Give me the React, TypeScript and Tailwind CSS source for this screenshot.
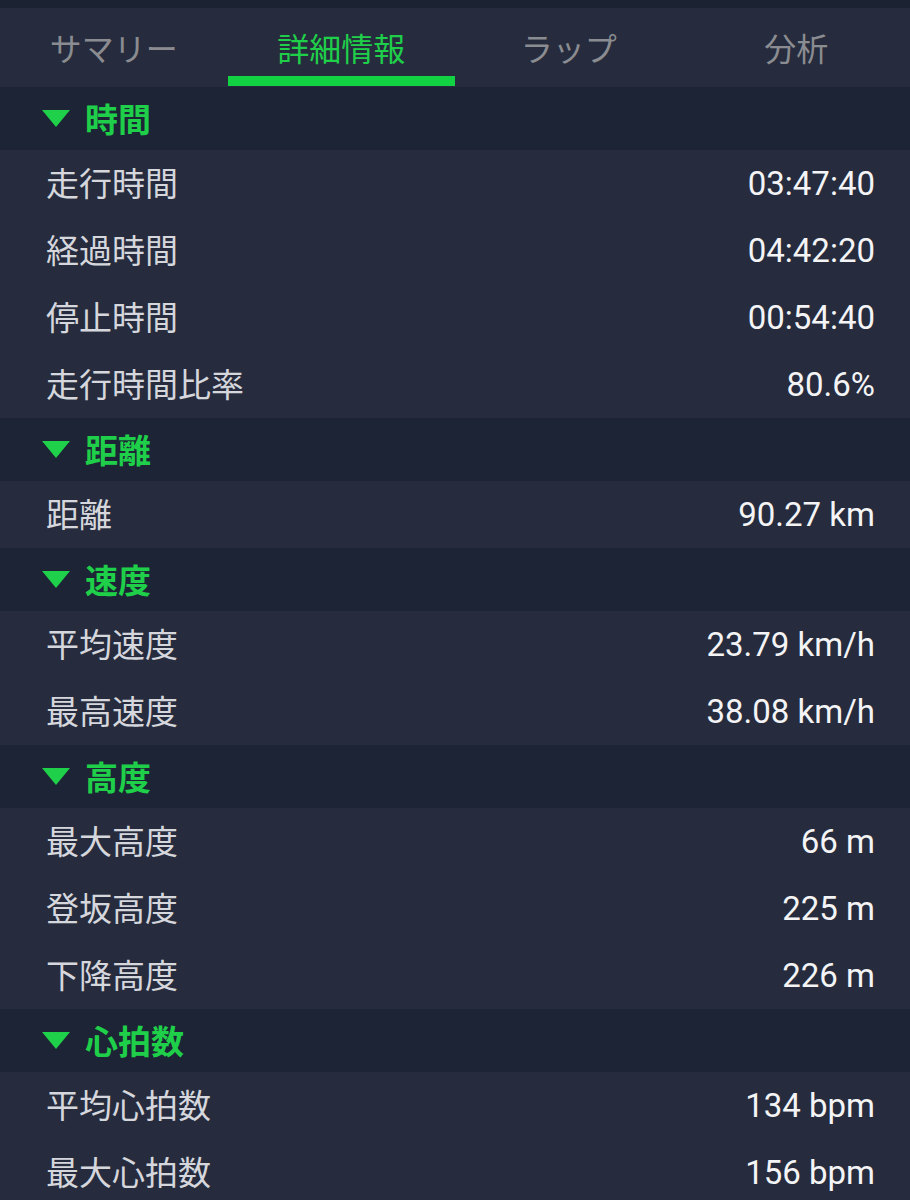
import React from "react";

const jp = { fontFamily: '"Noto Sans CJK JP", "Noto Sans", sans-serif' };
const num = { fontFamily: 'Roboto, "Noto Sans CJK JP", sans-serif' };

type Row = [string, string];
const sections: { title: string; rows: Row[] }[] = [
  {
    title: "時間",
    rows: [
      ["走行時間", "03:47:40"],
      ["経過時間", "04:42:20"],
      ["停止時間", "00:54:40"],
      ["走行時間比率", "80.6%"],
    ],
  },
  { title: "距離", rows: [["距離", "90.27 km"]] },
  {
    title: "速度",
    rows: [
      ["平均速度", "23.79 km/h"],
      ["最高速度", "38.08 km/h"],
    ],
  },
  {
    title: "高度",
    rows: [
      ["最大高度", "66 m"],
      ["登坂高度", "225 m"],
      ["下降高度", "226 m"],
    ],
  },
  {
    title: "心拍数",
    rows: [
      ["平均心拍数", "134 bpm"],
      ["最大心拍数", "156 bpm"],
    ],
  },
];

const tabs = ["サマリー", "詳細情報", "ラップ", "分析"];

export default function App() {
  return (
    <div className="w-[910px] h-[1200px] overflow-hidden bg-[#262c3d]">
      <div className="h-[8px] bg-[#1b2232]" />
      <div className="h-[79px] grid grid-cols-4 bg-[#262c3d]">
        {tabs.map((t, i) => (
          <div key={t} className="flex flex-col">
            <div
              className={`flex-1 flex items-center justify-center pt-[9px] text-[32px] leading-none ${
                i === 1 ? "text-[#1fcf4a]" : "text-[#8b8c91]"
              }`}
              style={jp}
            >
              {t}
            </div>
            <div className={`h-[10px] mb-[1px] ${i === 1 ? "bg-[#12d243]" : ""}`} />
          </div>
        ))}
      </div>
      {sections.map((s) => (
        <div key={s.title}>
          <div className="h-[63px] flex items-center pl-[42px] gap-[15px] bg-[#1c2435]">
            <svg width="28" height="17" viewBox="0 0 28 17">
              <polygon points="0,0 28,0 14,17" fill="#1ed04a" />
            </svg>
            <span className="text-[33px] font-bold leading-none text-[#1fcf4a]" style={jp}>
              {s.title}
            </span>
          </div>
          {s.rows.map(([l, v]) => (
            <div key={l} className="h-[67px] flex items-center justify-between pl-[46px] pr-[35px]">
              <span className="text-[33px] leading-none text-[#d5d7dd] -mt-[2px]" style={jp}>
                {l}
              </span>
              <span className="text-[33px] leading-none text-[#f4f4f6]" style={num}>
                {v}
              </span>
            </div>
          ))}
        </div>
      ))}
    </div>
  );
}
